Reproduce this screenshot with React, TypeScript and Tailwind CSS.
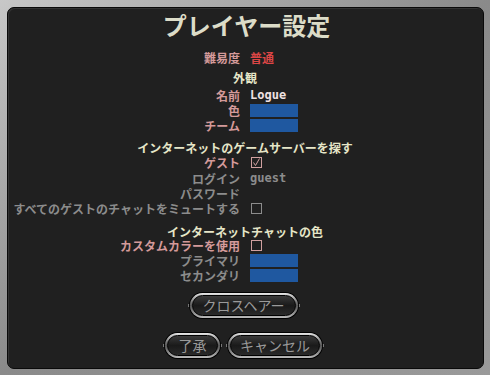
import React from "react";

const font = { fontFamily: '"Noto Sans CJK JP", "Noto Sans", sans-serif' };

function Row({ label, labelCls, children, mt = "" }: { label: string; labelCls: string; children?: React.ReactNode; mt?: string }) {
  return (
    <div className={`flex items-center h-[15px] ${mt}`}>
      <div className={`w-[240px] shrink-0 text-right whitespace-nowrap ${labelCls}`}>{label}</div>
      <div className="ml-[10px] flex items-center">{children}</div>
    </div>
  );
}

const Blue = () => <div className="w-[48px] h-[13px] bg-[#1f58a0]" />;
const Check = ({ cls, checked }: { cls: string; checked?: boolean }) => (
  <div className={`w-[11px] h-[11px] border ${cls} flex items-center justify-center ml-[1px]`}>
    {checked && (
      <svg width="9" height="9" viewBox="0 0 9 9">
        <path d="M1.5 4.5 L3.5 7.5 L7.5 0.5" fill="none" stroke="#d0a0a0" strokeWidth="1" />
      </svg>
    )}
  </div>
);

function Pill({ label, w }: { label: string; w: string }) {
  return (
    <div className={`relative ${w} h-[25px]`}>
      <div className="absolute left-[-2px] top-[11px] w-[5px] h-[3px] bg-[#777]" />
      <div className="absolute right-[-2px] top-[11px] w-[5px] h-[3px] bg-[#777]" />
      <div className="relative w-full h-full rounded-full p-[2px] bg-gradient-to-b from-[#e8e8e8] via-[#555] to-[#bbb] shadow-[0_0_0_1px_#000]">
        <div className="w-full h-full rounded-full bg-gradient-to-b from-[#3a3a3a] via-[#1a1a1a] to-[#2a2a2a] border border-[#000] flex items-center justify-center text-[#9a9a9a] text-[14px] leading-[15px] font-normal">
          {label}
        </div>
      </div>
    </div>
  );
}

const mono = { fontFamily: '"DejaVu Sans Mono", monospace' };

export default function App() {
  const pink = "text-[#d49a9a]";
  const gray = "text-[#8c8c8c]";
  const head = "text-[#e6e6c8]";
  return (
    <div style={font} className="w-[490px] h-[375px] bg-gradient-to-br from-[#c8c8c8] via-[#8a8a8a] to-[#9a9a9a] p-[7px] pr-[6px] pb-[6px] pt-[7px]">
      <div className="w-full h-full rounded-[7px] bg-[#202020] border border-[#0a0a0a] shadow-[inset_1px_1px_0_#333] font-bold text-[12px] leading-[15px] relative">
        <div className="text-center text-[24px] leading-[28px] text-[#dcdcc8] pt-[3px] h-[40px] pl-[2px]">プレイヤー設定</div>
        <div className="ml-[-8px] w-[490px]">
          <Row label="難易度" labelCls={pink} mt="mt-[2px]"><span className="text-[#dc4646]">普通</span></Row>
          <div className={`text-center ${head} h-[15px] mt-[5px]`}>外観</div>
          <Row label="名前" labelCls={pink} mt="mt-[3px]"><span className="text-[#f0e2e2] text-[12px]" style={mono}>Logue</span></Row>
          <Row label="色" labelCls={pink}><Blue /></Row>
          <Row label="チーム" labelCls={pink}><Blue /></Row>
          <div className={`text-center ${head} h-[15px] mt-[7px]`}>インターネットのゲームサーバーを探す</div>
          <Row label="ゲスト" labelCls={pink}><Check cls="border-[#d0a0a0]" checked /></Row>
          <Row label="ログイン" labelCls={gray} mt="mt-[1px]"><span className={`${gray} text-[12px]`} style={mono}>guest</span></Row>
          <Row label="パスワード" labelCls={gray} />
          <Row label="すべてのゲストのチャットをミュートする" labelCls={gray}><Check cls="border-[#8c8c8c]" /></Row>
          <div className={`text-center ${head} h-[15px] mt-[8px]`}>インターネットチャットの色</div>
          <Row label="カスタムカラーを使用" labelCls={pink} mt="mt-[-1px]"><Check cls="border-[#d0a0a0]" /></Row>
          <Row label="プライマリ" labelCls={gray}><Blue /></Row>
          <Row label="セカンダリ" labelCls={gray}><Blue /></Row>
          <div className="flex justify-center mt-[10px] pr-[3px]">
            <Pill label="クロスヘアー" w="w-[108px]" />
          </div>
          <div className="flex justify-center gap-[8px] mt-[15px] pr-[3px]">
            <Pill label="了承" w="w-[55px]" />
            <Pill label="キャンセル" w="w-[94px]" />
          </div>
        </div>
      </div>
    </div>
  );
}
